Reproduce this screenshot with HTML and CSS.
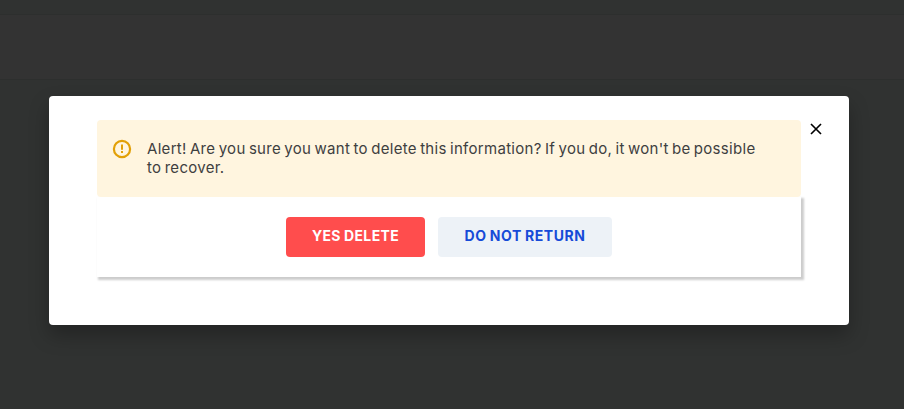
FILE: index.html
```html
<!DOCTYPE html>
<html lang="en">
<head>
<meta charset="utf-8">
<title>Delete confirmation</title>
<link rel="stylesheet" href="styles.css">
</head>
<body>
<div class="page">
  <div class="band"></div>
  <main class="dialog" role="dialog" aria-modal="true">
    <section class="content">
      <div class="alert">
        <svg class="alert-icon" viewBox="0 0 22 22" width="22" height="22"><circle cx="11" cy="11" r="8.1" fill="none" stroke="#e2a007" stroke-width="2.2"/><path d="M10 6.5h2v5.2h-2zM10 13h2v2h-2z" fill="#e2a007"/></svg>
        <p class="message"><span class="line">Alert! Are you sure you want to delete this information? If you do, it won't be possible</span> <span class="line">to recover.</span></p>
      </div>
      <div class="actions">
        <button class="button danger">YES DELETE</button>
        <button class="button neutral">DO NOT RETURN</button>
      </div>
    </section>
    <button class="close" aria-label="Close"><svg viewBox="0 0 12 12" width="12" height="12"><path d="M1 1l10 10M11 1L1 11" stroke="#000" stroke-width="1.65" fill="none"/></svg></button>
  </main>
</div>
</body>
</html>
```
FILE: styles.css
```css
* { box-sizing: border-box; }
body { margin: 0; background: #303231; font-family: Inter, "Liberation Sans", sans-serif; }
.page { height: 409px; padding-top: 14px; overflow: hidden; }
.band { height: 66px; background: #333; border-top: 1px solid #2d2f2e; border-bottom: 1px solid #2d2f2e; }
.dialog {
  position: relative;
  width: 800px;
  height: 229px;
  margin: 16px 0 0 49px;
  padding: 24px 48px;
  background: #fff;
  border-radius: 4px;
  box-shadow: 0 10px 20px rgba(0, 0, 0, .28);
}
.alert {
  position: relative;
  display: flex;
  height: 77px;
  padding: 18px 16px 0 14px;
  background: #fff5df;
  border-radius: 4px;
}
.alert-icon { flex: none; margin-right: 14px; }
.message { margin: 1px 0 0; color: #3e403f; font-size: 15px; line-height: 19px; letter-spacing: .3px; word-spacing: -1.2px; }
.line { display: block; white-space: nowrap; }
.actions {
  display: flex;
  justify-content: center;
  gap: 13px;
  height: 80px;
  padding-top: 20px;
  box-shadow: 2px 2px 2px 1px rgba(0, 0, 0, .2);
}
.button {
  height: 40px;
  padding: 0 0 2px;
  border: 0;
  border-radius: 4px;
  font: 700 14px/20px Inter, "Liberation Sans", sans-serif;
  white-space: nowrap;
}
.danger { width: 139px; background: #ff4d4d; color: #fff; letter-spacing: .35px; word-spacing: -.5px; }
.neutral { width: 174px; background: #edf2f7; color: #164bd8; font-weight: 650; letter-spacing: .55px; word-spacing: -.6px; }
.close {
  position: absolute;
  top: 27px;
  right: 27px;
  width: 12px;
  height: 12px;
  padding: 0;
  border: 0;
  background: none;
}
.close svg { display: block; }
```
